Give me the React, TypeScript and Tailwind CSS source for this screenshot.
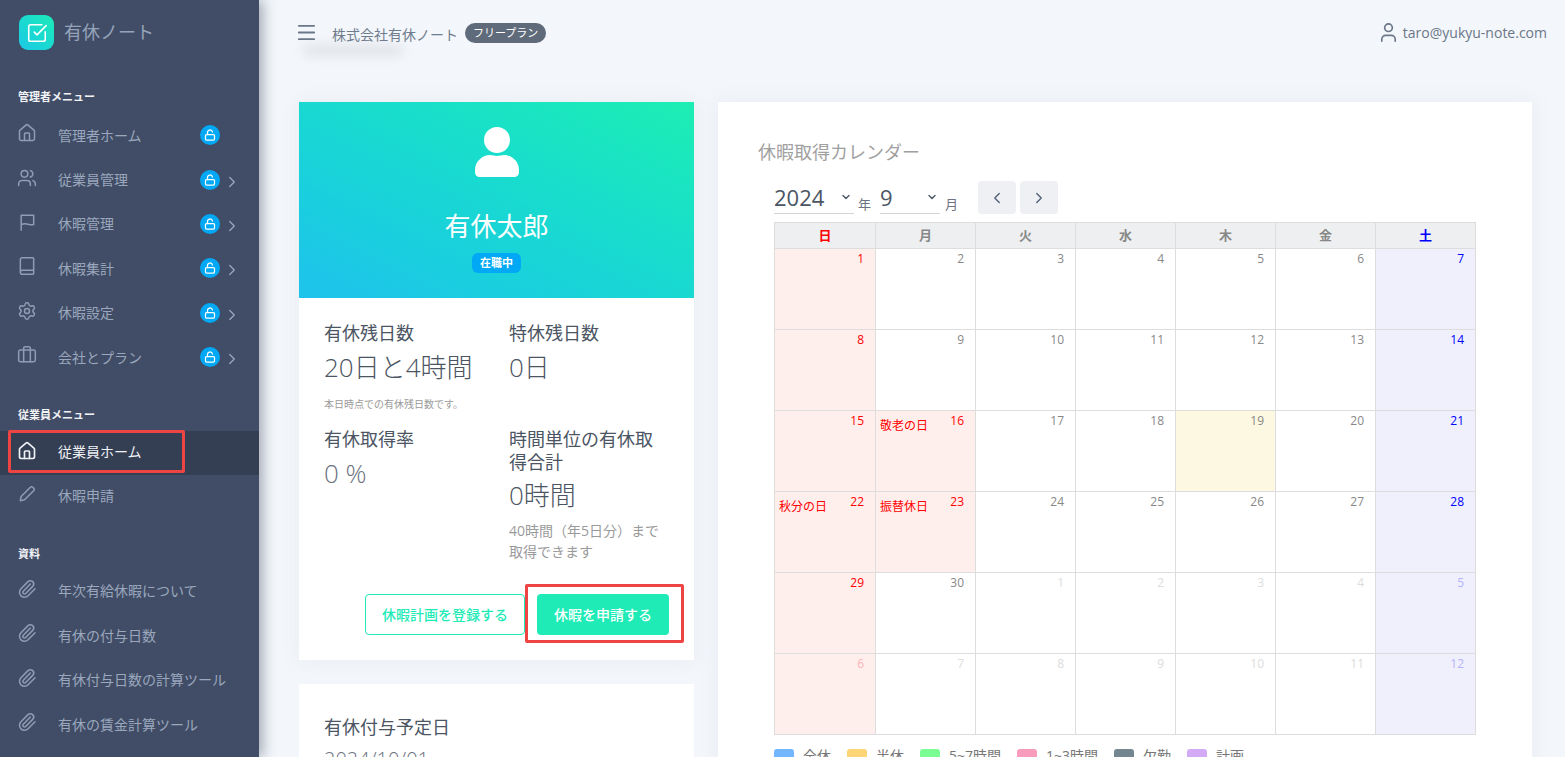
import {
  Book,
  Briefcase,
  ChevronLeft,
  ChevronRight,
  ChevronDown,
  House,
  LockOpen,
  Menu,
  Paperclip,
  Settings,
  SquareCheckBig,
  User,
  Users,
} from "lucide-react";
import type { ComponentType, ReactNode } from "react";

type IconProps = { className?: string; strokeWidth?: number };

function FlagIcon({ className, strokeWidth }: IconProps) {
  return (
    <svg className={className} viewBox="0 0 24 24" fill="none" stroke="currentColor" strokeWidth={strokeWidth} strokeLinecap="round" strokeLinejoin="round">
      <path d="M5 22V4h15v11c-4 1.5-7-1-10-1-2 0-4 .5-5 1" />
    </svg>
  );
}

function PencilIcon({ className, strokeWidth }: IconProps) {
  return (
    <svg className={className} viewBox="0 0 24 24" fill="none" stroke="currentColor" strokeWidth={strokeWidth} strokeLinecap="round" strokeLinejoin="round">
      <path d="M4 20l1-5L16 4a2 2 0 0 1 3 0l1 1a2 2 0 0 1 0 3L9 19z" />
    </svg>
  );
}

const adminMenu = [
  { label: "管理者ホーム", icon: House, arrow: false },
  { label: "従業員管理", icon: Users, arrow: true },
  { label: "休暇管理", icon: FlagIcon, arrow: true },
  { label: "休暇集計", icon: Book, arrow: true },
  { label: "休暇設定", icon: Settings, arrow: true },
  { label: "会社とプラン", icon: Briefcase, arrow: true },
];

const docs = ["年次有給休暇について", "有休の付与日数", "有休付与日数の計算ツール", "有休の賃金計算ツール"];

const weekdays = ["日", "月", "火", "水", "木", "金", "土"];

const days: { n: number; muted?: boolean; label?: string; today?: boolean }[] = [
  ...Array.from({ length: 30 }, (_, i) => ({ n: i + 1 })),
  ...Array.from({ length: 12 }, (_, i) => ({ n: i + 1, muted: true })),
];
days[15].label = "敬老の日";
days[21].label = "秋分の日";
days[22].label = "振替休日";
days[18].today = true;

const legend = [
  { label: "全休", color: "bg-[#74b6fb]" },
  { label: "半休", color: "bg-[#fdd574]" },
  { label: "5~7時間", color: "bg-[#7afd92]" },
  { label: "1~3時間", color: "bg-[#f79cbd]" },
  { label: "欠勤", color: "bg-[#748791]" },
  { label: "計画", color: "bg-[#d2aaf6]" },
];

function SectionTitle({ children, className }: { children: string; className: string }) {
  return <p className={`pl-[18px] text-[11px] leading-[18px] font-bold text-[#f1f3f7] ${className}`}>{children}</p>;
}

function MenuItem({
  label,
  icon: Icon,
  locked,
  arrow,
}: {
  label: string;
  icon: ComponentType<IconProps>;
  locked?: boolean;
  arrow?: boolean;
}) {
  return (
    <div className="flex h-[44.4px] items-center pl-[17px] text-[14px] text-[#9aa7bd]">
      <Icon className="h-[20px] w-[20px] -translate-y-[2px] text-[#8f9cb3]" strokeWidth={1.8} />
      <span className="ml-[21px] w-[142px] whitespace-nowrap">{label}</span>
      {locked && (
        <span className="flex h-5 w-5 items-center justify-center rounded-full bg-[#00a8f5]">
          <LockOpen className="h-[12px] w-[12px] text-white" strokeWidth={2.5} />
        </span>
      )}
      {arrow && <ChevronRight className="ml-[3px] h-[18px] w-[18px] translate-y-[2px] text-[#9aa7bd]" strokeWidth={1.7} />}
    </div>
  );
}

function Sidebar() {
  return (
    <aside className="z-10 h-screen w-[259px] shrink-0 overflow-hidden bg-[#414d66] shadow-[4px_0_12px_rgba(65,77,102,0.45)]">
      <div className="flex h-[88px] items-start pl-[19px] pt-[15px]">
        <div className="flex h-[35px] w-[35px] items-center justify-center rounded-[9px] bg-gradient-to-tr from-[#1ec8e6] to-[#1eebb6]">
          <SquareCheckBig className="h-[22px] w-[22px] text-white" strokeWidth={1.7} />
        </div>
        <span className="ml-[10px] mt-[3px] text-[18px] leading-[28px] text-[#95a3ba]">有休ノート</span>
      </div>
      <SectionTitle className="">管理者メニュー</SectionTitle>
      <div className="mt-[7px]">
        {adminMenu.map((m) => (
          <MenuItem key={m.label} label={m.label} icon={m.icon} locked arrow={m.arrow} />
        ))}
      </div>
      <SectionTitle className="mt-[27px]">従業員メニュー</SectionTitle>
      <div className="relative mt-[7px] bg-[#353f54]">
        <div className="flex h-[44px] items-center pb-[3px] pl-[17px] text-[14px] text-[#eef1f5]">
          <House className="h-[20px] w-[20px] -translate-y-[1px]" strokeWidth={2} />
          <span className="ml-[21px]">従業員ホーム</span>
        </div>
        <span className="absolute -top-[1px] left-[8px] h-[43px] w-[177px] rounded-[2px] border-[3px] border-[#ef4444]" />
      </div>
      <div className="-mt-[2px]">
        <MenuItem label="休暇申請" icon={PencilIcon} />
      </div>
      <SectionTitle className="mt-[27px]">資料</SectionTitle>
      <div className="mt-[6px]">
        {docs.map((d) => (
          <MenuItem key={d} label={d} icon={Paperclip} />
        ))}
      </div>
    </aside>
  );
}

function Header() {
  return (
    <header className="flex h-[102px] items-start px-[18px] pt-[21px] pl-[36px]">
      <div className="relative">
        <Menu className="h-[23px] w-[23px] text-[#6b7688]" strokeWidth={1.9} />
        <div className="absolute left-[8px] top-[25px] h-[9px] w-[100px] rounded-full bg-[#9aa3b0]/25 blur-[6px]" />
      </div>
      <span className="ml-[14px] mt-[4px] text-[14px] leading-[20px] text-[#6f7c8e]">株式会社有休ノート</span>
      <span className="ml-[7px] mt-[2px] rounded-full bg-[#5f6b7b] px-[8px] text-[11px] leading-[20px] text-white">フリープラン</span>
      <div className="ml-auto flex items-center text-[14px] leading-[18px] text-[#6b7688]">
        <User className="mr-[3px] h-[23px] w-[23px]" strokeWidth={1.7} />
        taro@yukyu-note.com
      </div>
    </header>
  );
}

function Stat({ title, children }: { title: ReactNode; children: ReactNode }) {
  return (
    <div>
      <p className="text-[18px] leading-[23px] text-[#4b5563]">{title}</p>
      {children}
    </div>
  );
}

function ProfileColumn() {
  return (
    <div className="w-[395px] shrink-0">
      <div className="bg-white shadow-[0_0_16px_rgba(200,210,225,0.25)]">
        <div className="flex h-[196px] flex-col items-center bg-gradient-to-tr from-[#1fc2ec] to-[#1eeeb3] pt-[24px]">
          <svg width="46" height="52" viewBox="0 0 46 52" fill="white">
            <circle cx="23" cy="14" r="13" />
            <path d="M1 44c0-9 8-15 15-15 3 0 4 1 7 1s4-1 7-1c7 0 15 6 15 15v2c0 3-2 5-5 5H6c-3 0-5-2-5-5z" />
          </svg>
          <p className="mt-[30px] text-[26px] leading-[36px] text-white">有休太郎</p>
          <span className="mt-[9px] rounded-[6px] bg-[#00a8f5] px-[8px] text-[11px] leading-[20px] font-bold text-white">在職中</span>
        </div>
        <div className="px-[25px] pt-[24px] pb-[25px]">
          <div className="grid grid-cols-[185px_1fr]">
            <Stat title="有休残日数">
              <p className="mt-[2px] text-[26px] leading-[40px] font-light text-[#4b5563]">20日と4時間</p>
              <p className="mt-[10px] text-[10px] leading-[14px] text-[#9a9a9a]">本日時点での有休残日数です。</p>
            </Stat>
            <Stat title="特休残日数">
              <p className="mt-[2px] text-[26px] leading-[40px] font-light text-[#4b5563]">0日</p>
            </Stat>
            <div className="mt-[17px]">
              <Stat title="有休取得率">
                <p className="mt-[2px] text-[26px] leading-[40px] font-light text-[#6b7280]">0 %</p>
              </Stat>
            </div>
            <div className="mt-[17px]">
              <Stat title="時間単位の有休取得合計">
                <p className="mt-[1px] text-[26px] leading-[40px] font-light text-[#4b5563]">0時間</p>
                <p className="mt-[5px] text-[14px] leading-[21px] text-[#9a9a9a]">40時間（年5日分）まで取得できます</p>
              </Stat>
            </div>
          </div>
          <div className="mt-[32px] flex justify-end">
            <button className="h-[41px] w-[160px] rounded-[4px] border border-[#1eebb6] text-[14px] font-medium text-[#1eebb6]">
              休暇計画を登録する
            </button>
            <div className="relative ml-[12px]">
              <button className="h-[41px] w-[132px] rounded-[4px] bg-[#1eebb6] text-[14px] font-medium text-white">
                休暇を申請する
              </button>
              <span className="absolute -left-[12px] -top-[10px] h-[59px] w-[159px] rounded-[2px] border-[3px] border-[#ef4444]" />
            </div>
          </div>
        </div>
      </div>
      <div className="mt-[24px] bg-white px-[25px] pt-[32px] pb-[40px]">
        <p className="text-[18px] leading-[23px] text-[#4b5563]">有休付与予定日</p>
        <p className="mt-[8px] text-[20px] leading-[26px] font-light text-[#6b7280]">2024/10/01</p>
      </div>
    </div>
  );
}

function dayColor(col: number, muted?: boolean) {
  if (col === 0) return muted ? "text-[#ffb3b3]" : "text-[#f00]";
  if (col === 6) return muted ? "text-[#b3b3ff]" : "text-[#00f]";
  return muted ? "text-[#dddddd]" : "text-[#888888]";
}

function Calendar() {
  return (
    <div className="ml-[24px] w-[814px] shrink-0 bg-white px-[40px] pt-[38px] pb-[40px] shadow-[0_0_16px_rgba(200,210,225,0.25)]">
      <p className="text-[18px] leading-[24px] text-[#a0a0a0]">休暇取得カレンダー</p>
      <div className="mx-[16px] mt-[17px]">
        <div className="flex h-[33px] items-end text-[#6b7280]">
          <div className="flex h-[33px] w-[80px] items-center justify-between border-b border-[#d4d4d4] pr-[2px] text-[22px] text-[#4b5563]">
            2024
            <ChevronDown className="h-[12px] w-[12px]" strokeWidth={2.8} />
          </div>
          <span className="ml-[4px] text-[13px] leading-[20px]">年</span>
          <div className="ml-[9px] flex h-[33px] w-[60px] items-center justify-between border-b border-[#d4d4d4] pr-[2px] text-[22px] text-[#4b5563]">
            9
            <ChevronDown className="h-[12px] w-[12px]" strokeWidth={2.8} />
          </div>
          <span className="ml-[5px] text-[13px] leading-[20px]">月</span>
          <button className="ml-[20px] flex h-[33px] w-[38px] items-center justify-center rounded-[4px] bg-[#eef0f3]">
            <ChevronLeft className="h-[18px] w-[18px] text-[#52607a]" strokeWidth={1.8} />
          </button>
          <button className="ml-[4px] flex h-[33px] w-[38px] items-center justify-center rounded-[4px] bg-[#eef0f3]">
            <ChevronRight className="h-[18px] w-[18px] text-[#52607a]" strokeWidth={1.8} />
          </button>
        </div>
        <div className="mt-[8px] grid w-[702px] grid-cols-[101px_repeat(6,100px)] border-t border-l border-[#dddddd]">
          {weekdays.map((w, i) => (
            <div
              key={w}
              className={`h-[26px] border-r border-b border-[#dddddd] bg-[#eeeff1] text-center text-[13px] leading-[25px] font-bold ${
                i === 0 ? "text-[#f00]" : i === 6 ? "text-[#00f]" : "text-[#888888]"
              }`}
            >
              {w}
            </div>
          ))}
          {days.map((d, i) => {
            const col = i % 7;
            const bg = d.today ? "bg-[#fdf8e1]" : col === 0 || d.label ? "bg-[#feefed]" : col === 6 ? "bg-[#f0f0fc]" : "bg-white";
            return (
              <div key={i} className={`relative h-[81px] border-r border-b border-[#dddddd] pt-[1px] pr-[11px] text-right text-[12px] leading-[18px] ${bg} ${dayColor(col, d.muted)}`}>
                <span className={d.label ? "text-[#f00]" : ""}>{d.n}</span>
                {d.label && <span className="absolute left-[4px] top-[6px] text-[12px] leading-[18px] text-[#f00]">{d.label}</span>}
              </div>
            );
          })}
        </div>
        <div className="mt-[11px] flex text-[14px] leading-[20px] text-[#777777]">
          {legend.map((l) => (
            <div key={l.label} className="mr-[16px] flex items-center">
              <span className={`mr-[9px] h-[16px] w-[20px] translate-y-[1px] rounded-[3px] ${l.color}`} />
              {l.label}
            </div>
          ))}
        </div>
      </div>
    </div>
  );
}

export default function App() {
  return (
    <div
      className="flex h-screen overflow-hidden bg-[#f3f6fa]"
      style={{ fontFamily: '"Open Sans", "Noto Sans CJK JP", sans-serif' }}
    >
      <Sidebar />
      <main className="min-w-0 flex-1 overflow-hidden">
        <Header />
        <div className="flex items-start pl-[40px]">
          <ProfileColumn />
          <Calendar />
        </div>
      </main>
    </div>
  );
}
